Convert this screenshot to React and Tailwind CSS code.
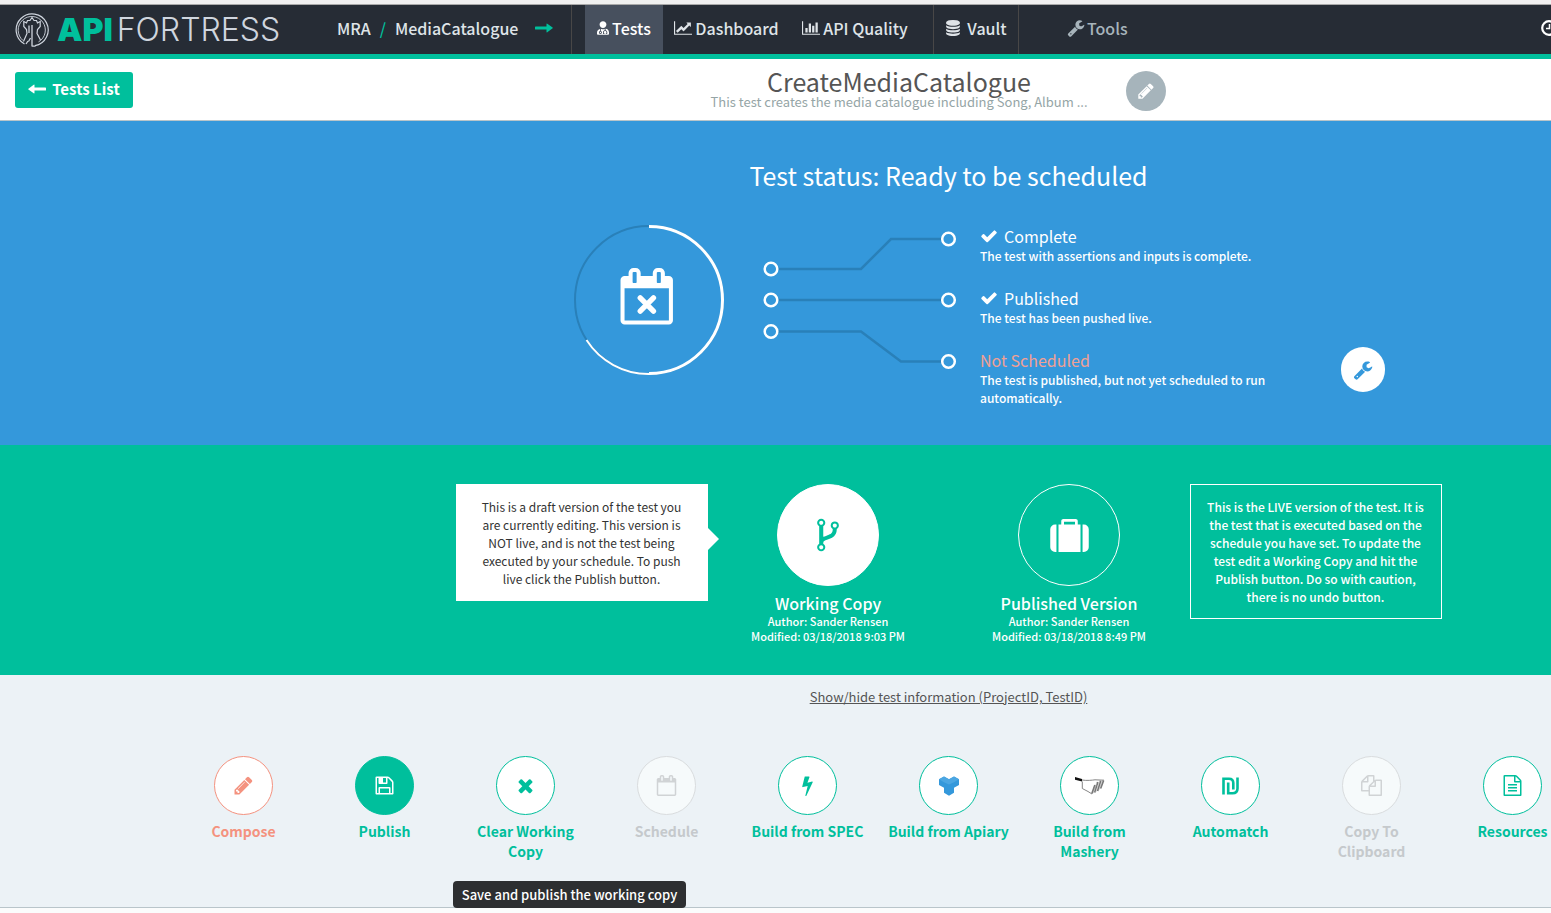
import React from "react";
import { FaUserMd } from "react-icons/fa";

const paths = {
  pencil:
    "M491 1536l91-91-235-235-91 91v107h128v128h107zm523-928q0-22-22-22-10 0-17 7l-542 542q-7 7-7 17 0 22 22 22 10 0 17-7l542-542q7-7 7-17zm-54-192l416 416-832 832h-416v-416zm683 96q0 53-37 90l-166 166-416-416 166-165q36-38 90-38 53 0 91 38l235 234q37 39 37 91z",
  wrench:
    "M448 1472q0-26-19-45t-45-19-45 19-19 45 19 45 45 19 45-19 19-45zm644-420l-682 682q-37 37-90 37-52 0-91-37l-106-108q-38-36-38-90 0-53 38-91l681-681q39 98 114.5 173.5t173.5 114.5zm634-435q0 39-23 106-47 134-164.5 217.5t-258.5 83.5q-185 0-316.5-131.5t-131.5-316.5 131.5-316.5 316.5-131.5q58 0 121.5 16.5t107.5 46.5q16 11 16 28t-16 28l-293 169v224l193 107q5-3 79-48.5t135.5-81 70.5-35.5q15 0 23.5 10t8.5 25z",
  check:
    "M1671 566q0 40-28 68l-724 724-136 136q-28 28-68 28t-68-28l-136-136-362-362q-28-28-28-68t28-68l136-136q28-28 68-28t68 28l294 295 656-657q28-28 68-28t68 28l136 136q28 28 28 68z",
  times:
    "M1490 1322q0 40-28 68l-136 136q-28 28-68 28t-68-28l-294-294-294 294q-28 28-68 28t-68-28l-136-136q-28-28-28-68t28-68l294-294-294-294q-28-28-28-68t28-68l136-136q28-28 68-28t68 28l294 294 294-294q28-28 68-28t68 28l136 136q28 28 28 68t-28 68l-294 294 294 294q28 28 28 68z",
  lineChart:
    "M2048 1536v128h-2048v-1536h128v1408h1920zm-128-1248v435q0 21-19.5 29.5t-35.5-7.5l-121-121-633 633q-10 10-23 10t-23-10l-233-233-416 416-192-192 585-585q10-10 23-10t23 10l233 233 464-464-121-121q-16-16-7.5-35.5t29.5-19.5h435q14 0 23 9t9 23z",
  barChart:
    "M640 896v512h-256v-512h256zm384-512v1024h-256v-1024h256zm1024 1152v128h-2048v-1536h128v1408h1920zm-640-896v768h-256v-768h256zm384-384v1152h-256v-1152h256z",
  database:
    "M896 768q237 0 443-43t325-127v170q0 69-103 128t-280 93.5-385 34.5-385-34.5-280-93.5-103-128v-170q119 84 325 127t443 43zm0 768q237 0 443-43t325-127v170q0 69-103 128t-280 93.5-385 34.5-385-34.5-280-93.5-103-128v-170q119 84 325 127t443 43zm0-384q237 0 443-43t325-127v170q0 69-103 128t-280 93.5-385 34.5-385-34.5-280-93.5-103-128v-170q119 84 325 127t443 43zm0-1152q208 0 385 34.5t280 93.5 103 128v128q0 69-103 128t-280 93.5-385 34.5-385-34.5-280-93.5-103-128v-128q0-69 103-128t280-93.5 385-34.5z",
  save:
    "M512 1536h768v-384h-768v384zm896 0h128v-896q0-14-10-38.5t-20-34.5l-281-281q-10-10-34-20t-39-10v416q0 40-28 68t-68 28h-576q-40 0-68-28t-28-68v-416h-128v1280h128v-416q0-40 28-68t68-28h832q40 0 68 28t28 68v416zm-384-928v-320q0-13-9.5-22.5t-22.5-9.5h-192q-13 0-22.5 9.5t-9.5 22.5v320q0 13 9.5 22.5t22.5 9.5h192q13 0 22.5-9.5t9.5-22.5zm640 32v928q0 40-28 68t-68 28h-1344q-40 0-68-28t-28-68v-1344q0-40 28-68t68-28h928q40 0 88 20t76 48l280 280q28 28 48 76t20 88z",
  suitcase:
    "M640 384h512v-128h-512v128zm-352 0v1280h-64q-92 0-158-66t-66-158v-832q0-92 66-158t158-66h64zm1120 0v1280h-1024v-1280h128v-160q0-40 28-68t68-28h576q40 0 68 28t28 68v160h128zm384 224v832q0 92-66 158t-158 66h-64v-1280h64q92 0 158 66t66 158z",
  fork:
    "M672 1472q0-40-28-68t-68-28-68 28-28 68 28 68 68 28 68-28 28-68zm0-1152q0-40-28-68t-68-28-68 28-28 68 28 68 68 28 68-28 28-68zm640 128q0-40-28-68t-68-28-68 28-28 68 28 68 68 28 68-28 28-68zm96 0q0 52-26 96.5t-70 69.5q-2 287-226 414-67 38-203 81-128 40-169.5 71t-41.5 100v26q44 25 70 69.5t26 96.5q0 80-56 136t-136 56-136-56-56-136q0-52 26-96.5t70-69.5v-820q-44-25-70-69.5t-26-96.5q0-80 56-136t136-56 136 56 56 136q0 52-26 96.5t-70 69.5v497q54-26 154-57 55-17 87.5-29.5t70.5-31 59-39.5 40.5-51 28-69.5 8.5-91.5q-44-25-70-69.5t-26-96.5q0-80 56-136t136-56 136 56 56 136z",
  calendar:
    "M192 1664h1408v-1024h-1408v1024zm384-1216v-288q0-14-9-23t-23-9h-64q-14 0-23 9t-9 23v288q0 14 9 23t23 9h64q14 0 23-9t9-23zm768 0v-288q0-14-9-23t-23-9h-64q-14 0-23 9t-9 23v288q0 14 9 23t23 9h64q14 0 23-9t9-23zm384-64v1280q0 52-38 90t-90 38h-1408q-52 0-90-38t-38-90v-1280q0-52 38-90t90-38h128v-96q0-66 47-113t113-47h64q66 0 113 47t47 113v96h384v-96q0-66 47-113t113-47h64q66 0 113 47t47 113v96h128q52 0 90 38t38 90z",
  bolt:
    "M1333 566q18 20 7 44l-540 1157q-13 25-42 25-4 0-14-2-17-5-25.5-19t-4.5-30l197-808-406 101q-4 1-12 1-18 0-31-11-18-15-13-39l201-825q4-14 16-23t28-9h328q19 0 32 12.5t13 29.5q0 8-5 18l-171 463 396-98q8-2 12-2 19 0 34 15z",
  files:
    "M1696 384q40 0 68 28t28 68v1216q0 40-28 68t-68 28h-960q-40 0-68-28t-28-68v-288h-544q-40 0-68-28t-28-68v-672q0-40 20-88t48-76l408-408q28-28 76-48t88-20h416q40 0 68 28t28 68v328q68-40 128-40h416zm-544 213l-299 299h299v-299zm-640-384l-299 299h299v-299zm196 647l316-316v-416h-384v416q0 40-28 68t-68 28h-416v640h512v-256q0-40 20-88t48-76zm956 804v-1152h-384v416q0 40-28 68t-68 28h-416v640h896z",
  fileText:
    "M1596 380q28 28 48 76t20 88v1152q0 40-28 68t-68 28h-1344q-40 0-68-28t-28-68v-1600q0-40 28-68t68-28h896q40 0 88 20t76 48zm-444-244v376h376q-10-29-22-41l-313-313q-12-12-41-22zm384 1528v-1024h-416q-40 0-68-28t-28-68v-416h-768v1536h1280zm-1024-864q0-14 9-23t23-9h704q14 0 23 9t9 23v64q0 14-9 23t-23 9h-704q-14 0-23-9t-9-23v-64zm736 224q14 0 23 9t9 23v64q0 14-9 23t-23 9h-704q-14 0-23-9t-9-23v-64q0-14 9-23t23-9h704zm0 256q14 0 23 9t9 23v64q0 14-9 23t-23 9h-704q-14 0-23-9t-9-23v-64q0-14 9-23t23-9h704z",
};

function Glyph({ name, className, viewBox = "0 0 1792 1792" }) {
  return (
    <svg viewBox={viewBox} className={className} fill="currentColor" aria-hidden="true">
      <path d={paths[name]} />
    </svg>
  );
}

function LongArrow({ className }) {
  return (
    <svg viewBox="0 0 18 10" className={className} fill="currentColor" aria-hidden="true">
      <path d="M.6 3.500H11.500V1.200q0-.9.8-.4L17.600 4.500q.5.400 0 .8L12.300 9.200q-.8.500-.8-.4V6.500H.6Q0 6.500 0 5.900V4.100q0-.6.6-.6z" />
    </svg>
  );
}

function Emblem() {
  return (
    <svg viewBox="0 0 34 34" className="h-[34px] w-[34px]" fill="none" stroke="#cfd5de" aria-hidden="true">
      <path d="M9.500 31A16 16 0 1 1 20 32.700" strokeWidth="1.200" />
      <path d="M8 27.500A13.600 13.600 0 1 1 23.500 28.900" strokeWidth=".9" />
      <path
        d="M8.500 28.500L12 20.500 11.500 16.500 8.800 13.500V8.500L11.500 10 12.500 7.500H15L17 4.500 19 7.500H21.500L22.500 10 25.200 8.500V13.500L22.500 16.500 22 20.500 25.500 27"
        strokeWidth="1.200"
      />
      <path d="M17 12V33.500M13.500 28.500L15.500 25M11 31L13 28M14 12.500V20M17 33.200H20.500" strokeWidth="1.300" />
    </svg>
  );
}

const ShekelIcon = () => (
  <svg viewBox="0 0 17 18" className="h-[18px] w-[17px]" fill="none" stroke="currentColor" strokeWidth="2.600" aria-hidden="true">
    <path d="M1.500 17.500V1.700H7Q11.300 1.700 11.300 6V12.500" />
    <path d="M6.200 5.500V16.200H10.500Q15.500 16.200 15.500 11.500V.5" />
  </svg>
);

const ApiaryIcon = () => (
  <svg viewBox="0 0 20 20" className="h-5 w-5" aria-hidden="true">
    <path d="M0 3.200L5 .4 10 3.200 15 .4 20 3.200V9L15 11.700V16.800L10 19.700 5 16.800V11.700L0 9z" fill="#3498db" />
    <path d="M0 3.200L5 .4 10 3.200 15 .4 20 3.200 15 6.200 10 8.500 5 6.200z" fill="#4ba6e2" />
  </svg>
);

const MasheryIcon = () => (
  <svg viewBox="0 0 30 18" className="h-[18px] w-[30px]" fill="none" stroke="#777" aria-hidden="true">
    <path d="M0 0L7 2 7 4.500 0 2.800z" fill="#111" stroke="none" />
    <path d="M7 3C12 3.800 17 3.200 20 2.800L29 3.200M7.300 4.500V11.500L13 14.500 17 17" strokeWidth=".9" />
    <path d="M28.500 3.500L25.500 11.500M25.700 3.800L22.500 14M22.800 5L19.600 15.500M20 8L17 16.500" strokeWidth="1.900" stroke="#777" />
    <path d="M27.200 4L24 13M24.400 4.500L21 15M21.600 6L18.300 16" strokeWidth=".7" stroke="#ccc" />
  </svg>
);

const tone = {
  green: { ring: "border-[#00bf9c] bg-white text-[#00bf9c]", text: "text-[#00bf9c]" },
  solid: { ring: "border-[#00bf9c] bg-[#00bf9c] text-white", text: "text-[#00bf9c]" },
  salmon: { ring: "border-[#f4927f] bg-white text-[#f4927f]", text: "text-[#f4927f]" },
  off: { ring: "border-[#d9dcde] bg-[#f6fafb] text-[#d0d3d5]", text: "text-[#c5c9cc]" },
};

const iconSize = "h-[21px] w-[21px]";

const actions = [
  { label: "Compose", tone: "salmon", icon: <Glyph name="pencil" className={iconSize} /> },
  { label: "Publish", tone: "solid", icon: <Glyph name="save" className={iconSize} /> },
  { label: "Clear Working Copy", tone: "green", icon: <Glyph name="times" className={iconSize} /> },
  { label: "Schedule", tone: "off", icon: <Glyph name="calendar" className={iconSize} /> },
  { label: "Build from SPEC", tone: "green", icon: <Glyph name="bolt" className={iconSize} /> },
  { label: "Build from Apiary", tone: "green", icon: <ApiaryIcon /> },
  { label: "Build from Mashery", tone: "green", icon: <MasheryIcon /> },
  { label: "Automatch", tone: "green", icon: <ShekelIcon /> },
  { label: "Copy To Clipboard", tone: "off", icon: <Glyph name="files" className={iconSize} /> },
  { label: "Resources", tone: "green", icon: <Glyph name="fileText" className={iconSize} /> },
];

const statuses = [
  { title: "Complete", done: true, text: "The test with assertions and inputs is complete." },
  { title: "Published", done: true, text: "The test has been pushed live." },
  { title: "Not Scheduled", done: false, text: "The test is published, but not yet scheduled to run automatically." },
];

function Header() {
  return (
    <header className="flex h-[54px] border-b-[5px] border-[#00bf9c] bg-[#262c35] text-[16px] font-medium text-[#dfe4e8]">
      <a href="#home" className="flex w-[322px] items-center gap-2 pl-[15px]">
        <Emblem />
        <span className="font-[Inter,sans-serif] text-[32px] leading-none font-light whitespace-nowrap text-[#cfd5de]">
          <b className="mr-1 font-black text-[#00bf9c]">API</b>FORTRESS
        </span>
      </a>
      <div className="flex w-[249px] items-center pb-[3px] pl-[15px]">
        <a href="#mra">MRA</a>
        <span className="px-[9px] text-[#00bf9c]">/</span>
        <a href="#catalogue">MediaCatalogue</a>
        <a href="#next" aria-label="Next" className="ml-auto pr-[18px] text-[#00bf9c]">
          <LongArrow className="h-[10px] w-[18px]" />
        </a>
      </div>
      <nav className="flex border-l border-[#484747] pl-[13px]">
        <a href="#tests" className="flex w-[78px] items-center justify-center gap-[3px] bg-[#47505e] pb-[3px] text-white">
          <FaUserMd className="h-[14px] w-3" />
          Tests
        </a>
        <a href="#dashboard" className="flex w-[127px] items-center justify-center gap-[3px] pb-[3px]">
          <Glyph name="lineChart" viewBox="0 0 2048 1792" className="h-4 w-[18px]" />
          Dashboard
        </a>
        <a href="#quality" className="flex w-[130px] items-center justify-center gap-[3px] pb-[3px]">
          <Glyph name="barChart" viewBox="0 0 2048 1792" className="h-4 w-[18px]" />
          API Quality
        </a>
        <a href="#vault" className="ml-[13px] flex w-[86px] items-center justify-center gap-1.5 border-x border-[#484747] pb-[3px]">
          <Glyph name="database" className="h-4 w-4" />
          Vault
        </a>
        <a href="#tools" className="ml-12 flex items-center gap-0.5 pb-[3px] text-[#a7b4bb]">
          <Glyph name="wrench" className="h-[18px] w-[18px]" />
          Tools
        </a>
      </nav>
      <a href="#history" aria-label="History" className="mr-[340px] ml-auto flex items-center pb-[3px] text-white">
        <svg viewBox="0 0 16 16" className="h-4 w-4" fill="none" stroke="currentColor" strokeWidth="2.200" aria-hidden="true">
          <circle cx="8" cy="8" r="6.800" />
          <path d="M8.500 4V8.500H5" strokeWidth="1.500" />
        </svg>
      </a>
    </header>
  );
}

function TitleBar() {
  return (
    <div className="flex h-[62px] border-b border-[#b9c5ca] bg-white">
      <div className="w-[704px] pt-[13px] pl-[15px]">
        <button className="flex h-9 w-[118px] items-center justify-center gap-1.5 rounded-[3px] bg-[#00bf9c] pb-0.5 text-[15px] font-bold text-white">
          <LongArrow className="h-[10px] w-[18px] rotate-180" />
          Tests List
        </button>
      </div>
      <div className="w-[390px] pt-2 text-center whitespace-nowrap">
        <h1 className="text-[25px] leading-[28px] text-[#555]">CreateMediaCatalogue</h1>
        <p className="text-[13px] leading-[14px] text-[#95a5a6]">This test creates the media catalogue including Song, Album ...</p>
      </div>
      <button aria-label="Edit" className="mt-3 ml-8 flex h-10 w-10 items-center justify-center rounded-full bg-[#a6b4bb] text-white">
        <Glyph name="pencil" className="h-[18px] w-[18px]" />
      </button>
    </div>
  );
}

function Connectors() {
  return (
    <svg viewBox="763 225 195 150" className="h-[150px] w-[195px]" fill="none" aria-hidden="true">
      <g stroke="#2980b9" strokeWidth="2.500">
        <path d="M778 269H861L891 239H941" />
        <path d="M778 300H941" />
        <path d="M778 331.500H861L901 361.500H941" />
      </g>
      <g stroke="#fff" strokeWidth="2.500">
        {[[771, 269], [771, 300], [771, 331.5], [948.5, 239], [948.5, 300], [948.5, 361.5]].map(([x, y]) => (
          <circle key={x + "-" + y} cx={x} cy={y} r="6.300" />
        ))}
      </g>
    </svg>
  );
}

function Status() {
  return (
    <section className="h-[324px] bg-[#3498db] text-white">
      <h2 className="pt-9 text-center text-[25px] leading-9">Test status: Ready to be scheduled</h2>
      <div className="flex items-start pt-8 pl-[574px]">
        <svg viewBox="0 0 150 150" className="h-[150px] w-[150px]" fill="none" aria-hidden="true">
          <circle cx="75" cy="75" r="74" stroke="#2980b9" strokeWidth="2" />
          <path d="M75 1.500A73.500 73.500 0 0 1 75 148.500" stroke="#fff" strokeWidth="3" />
          <path d="M75 149A74 74 0 0 1 12.500 115" stroke="#fff" strokeWidth="2" />
          <g transform="translate(44.500 43) scale(.0315)" fill="#fff">
            <path d={paths.calendar} />
            <path d="M690 950L1110 1370M1110 950L690 1370" stroke="#fff" strokeWidth="170" strokeLinecap="round" />
          </g>
        </svg>
        <div className="pl-[39px]">
          <Connectors />
        </div>
        <ul className="ml-[22px] w-[300px]">
          {statuses.map((s) => (
            <li key={s.title} className="h-[62px]">
              <h3 className={s.done ? "flex items-center gap-1.5 text-[16px] leading-[22px]" : "text-[16px] leading-[22px] text-[#f1a094]"}>
                {s.done && <Glyph name="check" className="h-[18px] w-[18px]" />}
                {s.title}
              </h3>
              <p className="text-[12px] leading-[18px] font-medium">{s.text}</p>
            </li>
          ))}
        </ul>
        <button aria-label="Configure" className="mt-[122px] ml-[61px] flex h-[45px] w-11 items-center justify-center rounded-full bg-white text-[#3498db]">
          <Glyph name="wrench" className="h-5 w-5" />
        </button>
      </div>
    </section>
  );
}

function Version({ title, time, ring, icon }) {
  return (
    <div className="flex w-[241px] flex-col items-center">
      <button aria-label={title} className={`flex h-[102px] w-[102px] items-center justify-center rounded-full border border-white ${ring}`}>
        {icon}
      </button>
      <h3 className="mt-[7px] text-[16px] leading-[21px] font-medium">{title}</h3>
      <p className="text-center text-[11px] leading-[15px] font-medium">
        Author: Sander Rensen
        <br />
        Modified: {time}
      </p>
    </div>
  );
}

function Versions() {
  return (
    <section className="flex h-[230px] items-start justify-center bg-[#00bf9c] pt-[39px] text-white">
      <div className="relative w-[252px] bg-white px-6 pt-[14px] pb-[13px] text-center text-[12px] leading-[18px] text-[#333]">
        This is a draft version of the test you are currently editing. This version is NOT live, and is not the test being executed by your schedule. To push live click the Publish button.
        <span className="absolute top-11 left-full border-y-[11px] border-l-[11px] border-y-transparent border-l-white" />
      </div>
      <Version title="Working Copy" time="03/18/2018 9:03 PM" ring="bg-white text-[#00bf9c]" icon={<Glyph name="fork" className="h-[38px] w-[38px]" />} />
      <Version title="Published Version" time="03/18/2018 8:49 PM" ring="text-white" icon={<Glyph name="suitcase" viewBox="0 128 1792 1536" className="h-[33px] w-[39px]" />} />
      <div className="w-[252px] border border-white px-4 pt-[13px] pb-3 text-center text-[12px] leading-[18px] font-medium">
        This is the LIVE version of the test. It is the test that is executed based on the schedule you have set. To update the test edit a Working Copy and hit the Publish button. Do so with caution, there is no undo button.
      </div>
    </section>
  );
}

function Actions() {
  return (
    <section className="relative h-[233px] border-b border-[#b9c5ca] bg-[#ecf2f6]">
      <div className="pt-3 text-center text-[13px] leading-5">
        <a href="#info" className="text-[#555] underline">Show/hide test information (ProjectID, TestID)</a>
      </div>
      <div className="flex pt-[49px] pl-[173px]">
        {actions.map((a) => (
          <button key={a.label} disabled={a.tone === "off"} className="flex w-[141px] flex-col items-center px-[9px]">
            <span className={`flex h-[59px] w-[59px] items-center justify-center rounded-full border ${tone[a.tone].ring}`}>{a.icon}</span>
            <span className={`mt-1.5 text-[14px] leading-5 font-bold ${tone[a.tone].text}`}>{a.label}</span>
          </button>
        ))}
      </div>
      <div role="tooltip" className="absolute bottom-[-1px] left-[453px] flex h-[27px] min-w-[233px] items-center justify-center rounded-sm bg-[#2d2f31] px-2 text-[13px] font-medium whitespace-nowrap text-white">
        Save and publish the working copy
      </div>
    </section>
  );
}

export default function App() {
  return (
    <div className="min-h-screen overflow-hidden bg-[#fbfcfc] font-['Noto_Sans_CJK_SC',sans-serif]">
      <div className="min-w-[1897px]">
        <div className="h-[5px] border-b border-[#a9a9a9] bg-[#f0f0f0]" />
        <Header />
        <TitleBar />
        <Status />
        <Versions />
        <Actions />
      </div>
    </div>
  );
}
